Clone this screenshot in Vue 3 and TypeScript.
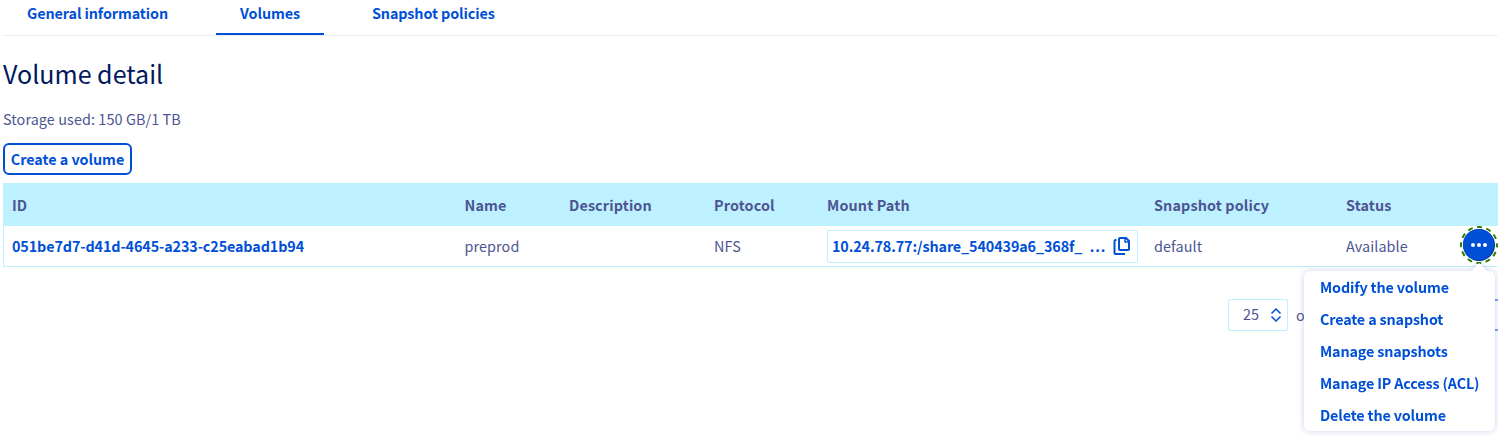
<script setup lang="ts">
const tabs: string[] = ['General information', 'Volumes', 'Snapshot policies']
const activeTab = 'Volumes'
const headings: string[] = ['ID', 'Name', 'Description', 'Protocol', 'Mount Path', 'Snapshot policy', 'Status', '']
const actions: string[] = [
  'Modify the volume',
  'Create a snapshot',
  'Manage snapshots',
  'Manage IP Access (ACL)',
  'Delete the volume',
]
</script>

<template>
  <main class="page">
    <nav class="tabs">
      <a v-for="tab in tabs" :key="tab" class="tab" :class="{ active: tab === activeTab }">{{ tab }}</a>
    </nav>
    <h1 class="title"><span>Volume detail</span></h1>
    <p class="usage">Storage used: 150 GB/1 TB</p>
    <button class="create" type="button">Create a volume</button>

    <section class="table">
      <div class="row head">
        <span v-for="h in headings" :key="h">{{ h }}</span>
      </div>
      <div class="row body">
        <a class="link">051be7d7-d41d-4645-a233-c25eabad1b94</a>
        <span>preprod</span>
        <span></span>
        <span>NFS</span>
        <div class="clipboard">
          <span class="path">10.24.78.77:/share_540439a6_368f_</span>
          <span class="dots">...</span>
          <svg class="copy" width="18" height="20" viewBox="0 0 18 20" fill="none" stroke="#0050d7" stroke-width="2" stroke-linejoin="round">
            <path d="M7 2h6L16 5V13a1 1 0 0 1-1 1H7a1 1 0 0 1-1-1V3a1 1 0 0 1 1-1z" />
            <path d="M12 2v4H16" stroke-width="1.500" />
            <path d="M3.500 4H2.500a1 1 0 0 0-1 1v12a1 1 0 0 0 1 1H12" />
          </svg>
        </div>
        <span>default</span>
        <span>Available</span>
        <div class="action">
          <svg class="more" width="38" height="38" viewBox="0 0 38 38">
            <circle cx="19" cy="19" r="18" fill="none" stroke="#2b8000" stroke-width="2" stroke-dasharray="5 4.425" stroke-dashoffset="2.500" />
            <circle cx="19" cy="19" r="16" fill="#00349b" />
            <circle cx="18.500" cy="18.500" r="15.500" fill="#0050d7" />
            <g fill="#fff">
              <circle cx="13" cy="19" r="2" />
              <circle cx="19" cy="19" r="2" />
              <circle cx="25" cy="19" r="2" />
            </g>
          </svg>
          <div class="menu">
            <svg class="arrow" width="20" height="10" viewBox="0 0 20 10"><path d="M0 10L10 0l10 10z" fill="#fff" /></svg>
            <a v-for="a in actions" :key="a">{{ a }}</a>
          </div>
        </div>
      </div>
    </section>

    <footer class="pager">
      <div class="size">
        <span>25</span>
        <svg width="12" height="14" viewBox="0 0 12 14" fill="none" stroke="#0050d7" stroke-width="1.500">
          <path d="M1.500 5.500L6 1l4.500 4.500M1.500 8.500L6 13l4.500-4.500" />
        </svg>
      </div>
      <span class="of">of</span>
      <div class="page-button"></div>
    </footer>
  </main>
</template>

<style>
body {
  margin: 0;
  background: #fff;
  overflow: hidden;
}
</style>

<style scoped>
.page {
  box-sizing: border-box;
  width: 1498px;
  height: 436px;
  padding-left: 3px;
  overflow: hidden;
  color: #4d5592;
  font-family: "Noto Sans CJK SC", "Noto Sans", sans-serif;
  font-size: 14.4px;
  letter-spacing: 0.09px;
  line-height: 24px;
  white-space: nowrap;
}
.tabs {
  display: flex;
  gap: 24px;
  height: 35px;
  border-bottom: 1px solid #e5f0f8;
}
.tab {
  box-sizing: border-box;
  height: 35px;
  padding: 1px 24px 0;
  color: #0050d7;
  font-size: 14.35px;
  font-weight: 700;
  letter-spacing: -0.09px;
}
.tab.active {
  border-bottom: 2px solid #0050d7;
}
.title {
  margin: 21px 0 0;
  color: #00185e;
  font-size: 25px;
  font-weight: 400;
  letter-spacing: 0.02px;
  line-height: 32px;
}
.usage {
  margin: 18px 0 12px;
}
.create {
  display: block;
  box-sizing: border-box;
  width: 129px;
  height: 32px;
  padding: 0;
  border: 2px solid #0050d7;
  border-radius: 6px;
  background: #fff;
  color: #0050d7;
  font: inherit;
  font-size: 14.35px;
  font-weight: 700;
  letter-spacing: -0.03px;
  line-height: 28px;
}
.table {
  margin-top: 8px;
  border: solid #bef1ff;
  border-width: 0 0 1px 1px;
}
.row {
  display: grid;
  grid-template-columns: 452.5px 104.5px 145px 113px 327px 192px 110px 1fr;
  align-items: center;
  padding-left: 8px;
}
.head {
  height: 43px;
  margin-left: -1px;
  padding: 0 0 0 9px;
  box-sizing: border-box;
  background: #bef1ff;
  font-weight: 700;
  letter-spacing: 0.12px;
}
.body {
  height: 40px;
}
.link,
.clipboard {
  color: #0050d7;
  font-size: 14.35px;
  font-weight: 700;
  letter-spacing: -0.11px;
}
.clipboard {
  display: flex;
  align-items: center;
  box-sizing: border-box;
  width: 311px;
  height: 33px;
  padding: 0 6px 0 4px;
  border: 1px solid #bef1ff;
  border-radius: 2px;
}
.dots {
  margin-left: 7.5px;
  letter-spacing: 0.8px;
}
.copy {
  margin-left: auto;
}
.action {
  position: relative;
  width: 38px;
  height: 38px;
  margin-left: 4px;
  margin-top: -2px;
}
.more {
  display: block;
}
.menu {
  position: absolute;
  z-index: 2;
  top: 45px;
  left: -156px;
  display: flex;
  flex-direction: column;
  box-sizing: border-box;
  width: 191px;
  height: 160px;
  padding-left: 16px;
  border-radius: 6px;
  background: #fff;
  filter: drop-shadow(0 0 3px rgba(0, 14, 156, 0.2));
  color: #0050d7;
  font-size: 14.35px;
  font-weight: 700;
  letter-spacing: -0.15px;
  line-height: 32px;
}
.arrow {
  position: absolute;
  top: -8px;
  left: 165px;
}
.pager {
  display: flex;
  margin: 32px 0 0 1225px;
}
.size {
  display: flex;
  flex: none;
  align-items: center;
  justify-content: space-between;
  box-sizing: border-box;
  width: 60px;
  height: 32px;
  padding: 0 5px 3px 14px;
  border: 1px solid #bef1ff;
  border-radius: 2px;
}
.size svg {
  margin-top: 3px;
}
.of {
  margin: 4px 0 0 8px;
}
.page-button {
  box-sizing: border-box;
  flex: none;
  width: 40px;
  height: 32px;
  margin-left: 160px;
  border: 2px solid #809fe8;
  border-radius: 6px;
}
</style>
